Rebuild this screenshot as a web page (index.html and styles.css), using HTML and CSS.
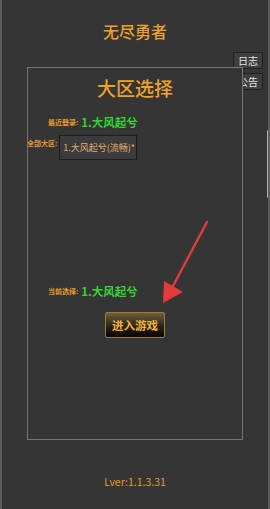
FILE: index.html
```html
<!DOCTYPE html>
<html>
<head>
  <meta charset="UTF-8">
  <title>无尽勇者</title>
  <link rel="stylesheet" href="styles.css">
</head>
<body>
  <div class="screen">
    <h1 class="title">无尽勇者</h1>

    <button class="side-btn log-btn">日志</button>
    <button class="side-btn notice-btn">公告</button>

    <div class="panel">
      <h2 class="panel-title">大区选择</h2>

      <div class="row recent">
        <span class="label">最近登录:</span>
        <span class="server">1.大风起兮</span>
      </div>

      <div class="row all">
        <span class="label">全部大区:</span>
        <div class="select">1.大风起兮(流畅)*</div>
      </div>

      <div class="row current">
        <span class="label">当前选择:</span>
        <span class="server">1.大风起兮</span>
      </div>

      <button class="enter-btn">进入游戏</button>
    </div>

    <div class="version">Lver:1.1.3.31</div>

    <div class="scroll-thumb"></div>

    <svg class="arrow" width="270" height="509" viewBox="0 0 270 509">
      <line x1="207" y1="222" x2="173" y2="286" stroke="#e23b3b" stroke-width="2.5" stroke-linecap="round"/>
      <polygon points="163,303 183,292 164,281" fill="#e23b3b"/>
    </svg>
  </div>
</body>
</html>
```

FILE: styles.css
```css
* {
  box-sizing: border-box;
}

body {
  margin: 0;
  background-color: #353535;
  font-family: "Noto Sans CJK SC", "Noto Sans", sans-serif;
}

.screen {
  position: relative;
  width: 270px;
  height: 509px;
  display: flex;
  flex-direction: column;
  align-items: center;
  background-color: #353535;
  border-left: 2px solid #5c5c5c;
  border-right: 2px solid #5c5c5c;
  overflow: hidden;
}

.title {
  margin: 20px 0 0;
  font-size: 16px;
  line-height: 22px;
  font-weight: 500;
  color: #eea228;
}

.side-btn {
  position: absolute;
  right: 5px;
  width: 30px;
  height: 17px;
  padding: 0;
  background-color: #3e3e3e;
  border: 1px solid #202020;
  border-radius: 1px;
  color: #e2e2e2;
  font-family: inherit;
  font-size: 10px;
  line-height: 15px;
}

.log-btn {
  top: 52px;
}

.notice-btn {
  top: 73px;
}

.panel {
  position: relative;
  z-index: 1;
  width: 216px;
  height: 373px;
  margin-top: 25px;
  display: flex;
  flex-direction: column;
  background-color: #353535;
  border: 1px solid #767676;
}

.panel-title {
  margin: 8px 0 0;
  text-align: center;
  font-size: 19px;
  line-height: 24px;
  font-weight: 500;
  color: #eea228;
}

.row {
  display: flex;
  align-items: center;
}

.label {
  font-size: 7px;
  line-height: 10px;
  font-weight: bold;
  color: #e39a2c;
}

.server {
  margin-left: 3px;
  font-size: 11.5px;
  line-height: 16px;
  font-weight: bold;
  color: #35d335;
}

.recent {
  margin-top: 14px;
  padding-left: 20px;
}

.all {
  margin-top: 5px;
  margin-left: -1px;
  align-items: flex-start;
}

.all .label {
  margin-top: 3px;
}

.select {
  width: 78px;
  height: 25px;
  margin-left: 2px;
  padding-left: 3px;
  background-color: #3b3b3b;
  border: 1px solid #1c1c1c;
  color: #e6b070;
  font-size: 9px;
  line-height: 23px;
  white-space: nowrap;
  overflow: hidden;
}

.current {
  margin-top: 123px;
  padding-left: 20px;
}

.enter-btn {
  align-self: center;
  width: 60px;
  height: 26px;
  margin-top: 13px;
  padding: 0;
  background: linear-gradient(#6e5e3e, #2a2418 55%, #050505);
  border: 1px solid #9a7a35;
  border-radius: 2px;
  color: #f2b440;
  font-family: inherit;
  font-size: 11.5px;
  font-weight: bold;
  line-height: 24px;
}

.version {
  margin-top: 35px;
  font-size: 10.5px;
  line-height: 14px;
  color: #e39a2c;
}

.scroll-thumb {
  position: absolute;
  top: 130px;
  right: -2px;
  width: 3px;
  height: 68px;
  background-color: #b0b0b0;
  border-radius: 1px;
}

.arrow {
  position: absolute;
  top: 0;
  left: -2px;
  z-index: 2;
  pointer-events: none;
}
```
